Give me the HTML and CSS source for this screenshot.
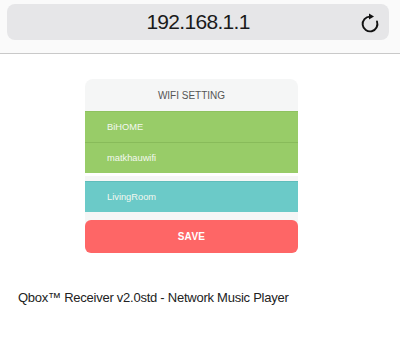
FILE: index.html
```html
<!DOCTYPE html>
<html lang="en">
<head>
  <meta charset="UTF-8" />
  <meta name="viewport" content="width=device-width, initial-scale=1.0" />
  <title>WIFI SETTING</title>
  <link rel="stylesheet" href="styles.css">
</head>
<body>
  <header class="topbar">
    <div class="urlbar">
      <span class="url">192.168.1.1</span>
      <svg class="reload" width="20" height="20" viewBox="0 0 20 20">
        <path d="M10 3.6 A7.4 7.4 0 1 0 17 8.5" fill="none" stroke="#111" stroke-width="1.9" stroke-linecap="round" />
        <polygon points="9,0.6 14,3.6 9,6.6" fill="#111" />
      </svg>
    </div>
  </header>

  <main>
    <div class="card">
      <div class="card-title">WIFI SETTING</div>
      <div class="group">
        <div class="field green">BiHOME</div>
        <div class="field green">matkhauwifi</div>
      </div>
      <div class="field teal">LivingRoom</div>
      <button class="save">SAVE</button>
    </div>

    <p class="footer">Qbox™ Receiver v2.0std - Network Music Player</p>
  </main>
</body>
</html>
```

FILE: styles.css
```css
* {
  margin: 0;
  padding: 0;
  box-sizing: border-box;
  font-family: 'Liberation Sans', Arial, sans-serif;
}
body {
  background: #fff;
  color: #222;
}
.topbar {
  height: 54px;
  padding: 4px 11px 0 7px;
  border-bottom: 1px solid #c9c9c9;
  background: #fafafa;
}
.urlbar {
  height: 36px;
  background: #e6e6e8;
  border-radius: 8px;
  display: flex;
  align-items: center;
  justify-content: center;
  position: relative;
}
.url {
  font-size: 21px;
  letter-spacing: -0.7px;
  color: #1a1a1a;
}
.reload {
  position: absolute;
  right: 9px;
  top: 9px;
}
main {
  padding-top: 25px;
}
.card {
  width: 213px;
  margin-left: 85px;
  background: #f5f6f6;
  border-radius: 8px;
  display: flex;
  flex-direction: column;
}
.card-title {
  height: 32px;
  display: flex;
  align-items: center;
  justify-content: center;
  font-size: 10px;
  color: #555;
}
.group {
  border-bottom: 3px solid #fff;
  margin-bottom: 5px;
}
.field {
  height: 31px;
  display: flex;
  align-items: center;
  padding-left: 22px;
  font-size: 9.3px;
  color: #f4f8f0;
}
.green {
  background: #98cc68;
  border-top: 1px solid #8ec25f;
}
.green + .green {
  border-top: 1px solid #88bb5a;
}
.teal {
  background: #6bcac8;
  border-top: 1px solid #5fbdbb;
}
.save {
  margin-top: 8px;
  height: 33px;
  border: none;
  border-radius: 6px;
  background: #fe6666;
  color: #fff;
  font-size: 10px;
  font-weight: bold;
  letter-spacing: 0.3px;
}
.footer {
  margin: 37px 0 0 18px;
  font-size: 13px;
  letter-spacing: -0.25px;
  color: #222;
}
```
